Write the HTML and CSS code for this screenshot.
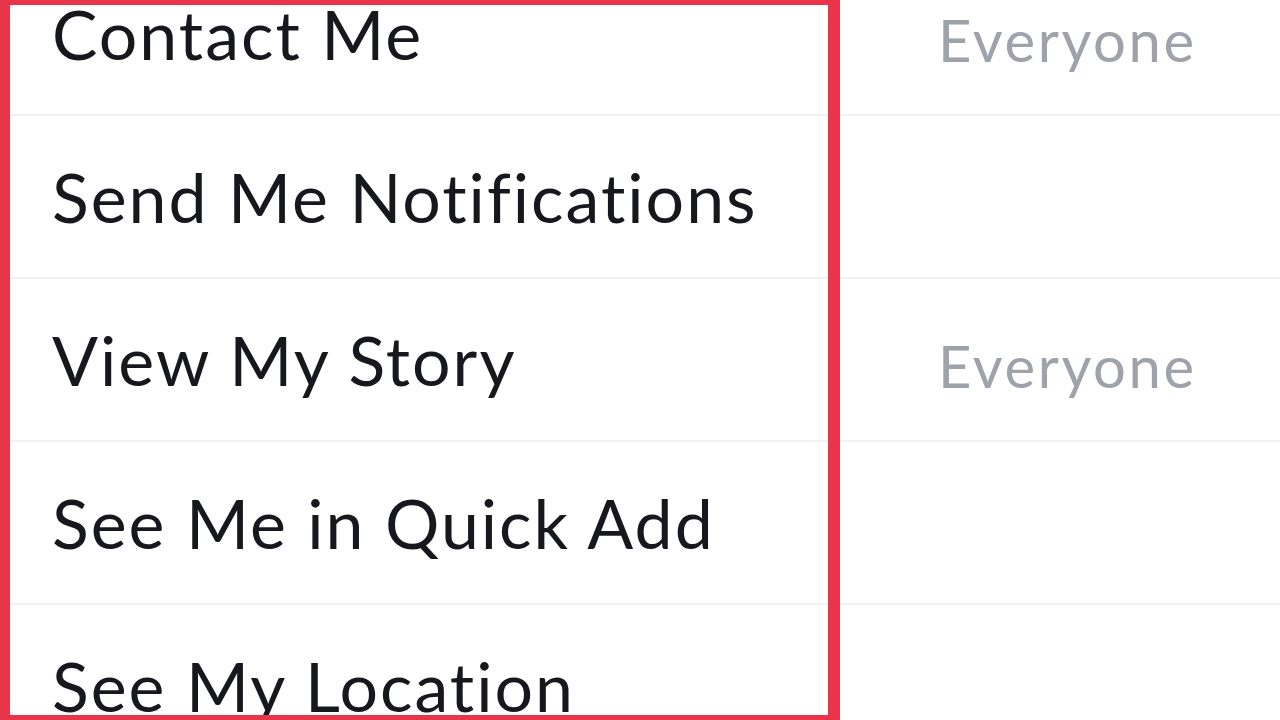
FILE: index.html
```html
<!DOCTYPE html>
<html lang="en">
<head>
  <meta charset="UTF-8">
  <meta name="viewport" content="width=device-width, initial-scale=1.0">
  <title>Privacy Settings</title>
  <link rel="stylesheet" href="styles.css">
</head>
<body>
  <main class="screen">
    <ul class="settings">
      <li class="row">
        <span class="label">Contact Me</span>
        <span class="value">Everyone</span>
      </li>
      <li class="row">
        <span class="label">Send Me Notifications</span>
      </li>
      <li class="row">
        <span class="label">View My Story</span>
        <span class="value">Everyone</span>
      </li>
      <li class="row">
        <span class="label">See Me in Quick Add</span>
      </li>
      <li class="row">
        <span class="label">See My Location</span>
      </li>
    </ul>
    <!-- highlight box drawn over the list -->
    <div class="highlight"></div>
  </main>
</body>
</html>
```

FILE: styles.css
```css
html, body {
  margin: 0;
  padding: 0;
  background-color: #ffffff;
}

body {
  font-family: Lato, "Open Sans", sans-serif;
  font-variant-ligatures: none;
  color: #17171e;
}

.screen {
  position: relative;
  width: 1280px;
  height: 720px;
  overflow: hidden;
}

.settings {
  list-style: none;
  margin: -47px 0 0 0;
  padding: 0;
}

.row {
  display: flex;
  align-items: center;
  height: 161px;
  border-bottom: 2px solid #f1f2f4;
}

.label {
  flex: 1;
  padding-left: 52px;
  font-size: 68px;
  line-height: 1;
  letter-spacing: 2px;
}

.value {
  width: 342px;
  padding-top: 12px;
  font-size: 58px;
  line-height: 1;
  letter-spacing: 2.6px;
  color: #9ea2aa;
}

.highlight {
  position: absolute;
  top: 0;
  left: 0;
  width: 818px;
  height: 710px;
  border-style: solid;
  border-color: #e8354a;
  border-width: 5px 12px 5px 10px;
}
```
